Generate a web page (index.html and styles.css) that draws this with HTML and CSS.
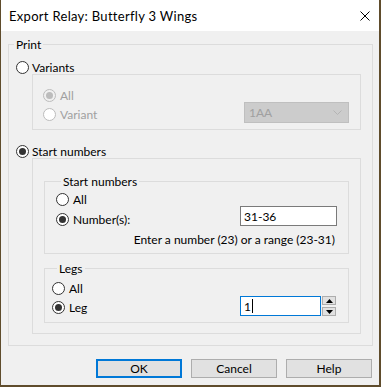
FILE: index.html
```html
<!DOCTYPE html>
<html lang="en">
<head>
    <meta charset="UTF-8">
    <title>Export Relay</title>
    <link rel="stylesheet" href="styles.css">
</head>
<body>
    <div class="window">
        <div class="titlebar">
            <span class="title">Export Relay: Butterfly 3 Wings</span>
            <svg class="close" width="10" height="10" viewBox="0 0 10 10">
                <path d="M0.5 0.5 L9.5 9.5 M9.5 0.5 L0.5 9.5" stroke="#000" stroke-width="1" fill="none"/>
            </svg>
        </div>
        <div class="client">
            <fieldset class="group print-group">
                <legend>Print</legend>

                <div class="opt-row variants-opt">
                    <span class="radio"></span>
                    <span class="opt-label">Variants</span>
                </div>
                <div class="subbox variants-box">
                    <div class="opt-row sub-opt disabled">
                        <span class="radio checked"></span>
                        <span class="opt-label">All</span>
                    </div>
                    <div class="variant-row">
                        <div class="opt-row sub-opt disabled">
                            <span class="radio"></span>
                            <span class="opt-label">Variant</span>
                        </div>
                        <div class="combo">
                            <span>1AA</span>
                            <svg width="9" height="5" viewBox="0 0 9 5">
                                <path d="M0.5 0.5 L4.5 4.5 L8.5 0.5" stroke="#b4b4b4" fill="none"/>
                            </svg>
                        </div>
                    </div>
                </div>

                <div class="opt-row start-opt">
                    <span class="radio checked"></span>
                    <span class="opt-label">Start numbers</span>
                </div>
                <div class="subbox start-box">
                    <fieldset class="group inner-group numbers-group">
                        <legend>Start numbers</legend>
                        <div class="opt-row">
                            <span class="radio"></span>
                            <span class="opt-label">All</span>
                        </div>
                        <div class="field-row">
                            <div class="opt-row">
                                <span class="radio checked"></span>
                                <span class="opt-label">Number(s):</span>
                            </div>
                            <input type="text" class="textbox numbers-input" value="31-36">
                        </div>
                        <div class="hint">Enter a number (23) or a range (23-31)</div>
                    </fieldset>

                    <fieldset class="group inner-group legs-group">
                        <legend>Legs</legend>
                        <div class="opt-row">
                            <span class="radio"></span>
                            <span class="opt-label">All</span>
                        </div>
                        <div class="field-row">
                            <div class="opt-row">
                                <span class="radio checked"></span>
                                <span class="opt-label">Leg</span>
                            </div>
                            <div class="textbox leg-input focused"><span>1</span><span class="caret"></span></div>
                            <div class="spinner">
                                <div class="spin-btn">
                                    <svg width="7" height="4" viewBox="0 0 7 4"><path d="M3.5 0 L7 4 L0 4 Z" fill="#000"/></svg>
                                </div>
                                <div class="spin-btn">
                                    <svg width="7" height="4" viewBox="0 0 7 4"><path d="M0 0 L7 0 L3.5 4 Z" fill="#000"/></svg>
                                </div>
                            </div>
                        </div>
                    </fieldset>
                </div>
            </fieldset>

            <div class="buttons">
                <button type="button" class="btn default">OK</button>
                <button type="button" class="btn">Cancel</button>
                <button type="button" class="btn">Help</button>
            </div>
        </div>
    </div>
</body>
</html>
```

FILE: styles.css
```css
body {
    margin: 0;
    background-color: #5f4c2c;
    font-family: 'Lato', 'Noto Sans', sans-serif;
    font-size: 12px;
    color: #000;
}

.window {
    margin-left: 1px;
    width: 378px;
    height: 385px;
    background-color: #f0f0f0;
}

.titlebar {
    height: 31px;
    background-color: #fff;
    display: flex;
    align-items: center;
    justify-content: space-between;
    padding: 0 9px 0 8px;
    box-sizing: border-box;
}

.title {
    font-size: 13px;
    line-height: 16px;
    letter-spacing: 0.3px;
    margin-top: 1px;
}

.close {
    display: block;
}

.client {
    padding-top: 6px;
}

/* group boxes */
.group {
    margin: 0;
    padding: 0;
    border: 1px solid #dcdcdc;
    min-width: 0;
}

.group legend {
    padding: 0 2px;
    margin-left: 5px;
    line-height: 15px;
}

.print-group {
    margin-left: 7px;
    width: 365px;
    box-sizing: border-box;
    padding-bottom: 11px;
}

.subbox {
    border: 1px solid #dcdcdc;
    margin-left: 23px;
    width: 329px;
    box-sizing: border-box;
}

/* radio rows */
.opt-row {
    display: flex;
    align-items: center;
    height: 13px;
    line-height: 13px;
    white-space: nowrap;
}

.radio {
    width: 13px;
    height: 13px;
    box-sizing: border-box;
    border: 1px solid #333;
    border-radius: 50%;
    background-color: #fff;
    margin-right: 4px;
    display: flex;
    align-items: center;
    justify-content: center;
    flex-shrink: 0;
}

.radio.checked::after {
    content: '';
    width: 7px;
    height: 7px;
    border-radius: 50%;
    background-color: #333;
}

.disabled .radio {
    border-color: #bcbcbc;
    background-color: #fff;
}

.disabled .radio.checked {
    background-color: #f0f0f0;
}

.disabled .radio.checked::after {
    background-color: #bcbcbc;
}

.disabled .opt-label {
    color: #a0a0a0;
}

.variants-opt {
    margin-top: 9px;
    margin-left: 7px;
}

.variants-opt .radio,
.start-opt .radio {
    margin-right: 3px;
}

.variants-box {
    padding: 14px 11px 6px 10px;
}

.sub-opt .radio {
    margin-right: 4px;
}

.variant-row {
    display: flex;
    justify-content: space-between;
    align-items: flex-start;
    height: 21px;
}

.variant-row .opt-row {
    margin-top: 6px;
}

.combo {
    width: 105px;
    height: 21px;
    box-sizing: border-box;
    border: 1px solid #bfbfbf;
    background-color: #cccccc;
    color: #a0a0a0;
    display: flex;
    align-items: center;
    justify-content: space-between;
    padding: 0 6px 0 4px;
}

.start-opt {
    margin-top: 15px;
    margin-left: 7px;
}

.start-box {
    padding: 15px 11px 10px 11px;
}

.inner-group {
    width: 305px;
    box-sizing: border-box;
}

.numbers-group {
    padding: 4px 11px 6px 11px;
}

.legs-group {
    margin-top: 7px;
    padding: 6px 12px 6px 7px;
}

.field-row {
    display: flex;
    align-items: flex-start;
    height: 20px;
}

.numbers-group .field-row .opt-row {
    margin-top: 7px;
}

.legs-group .field-row {
    margin-top: 1px;
}

.legs-group .field-row .opt-row {
    margin-top: 5px;
}

.textbox {
    height: 20px;
    box-sizing: border-box;
    border: 1px solid #7a7a7a;
    background-color: #fff;
    font: inherit;
    padding: 0 3px;
    margin: 0 0 0 auto;
    outline: none;
}

.numbers-input {
    width: 97px;
}

.leg-input {
    width: 81px;
    display: flex;
    align-items: center;
}

.leg-input.focused {
    border-color: #0078d7;
}

.caret {
    width: 1px;
    height: 14px;
    background-color: #000;
    margin-left: 1px;
}

.spinner {
    margin-left: 1px;
    width: 14px;
    height: 20px;
    display: flex;
    flex-direction: column;
    justify-content: space-between;
    padding: 0;
}

.spin-btn {
    height: 9px;
    box-sizing: border-box;
    border: 1px solid #adadad;
    background-color: #e1e1e1;
    display: flex;
    align-items: center;
    justify-content: center;
}

.hint {
    text-align: right;
    margin-top: 7px;
    line-height: 14px;
    padding-right: 2px;
}

/* dialog buttons */
.buttons {
    display: flex;
    justify-content: flex-end;
    gap: 9px;
    margin-top: 13px;
    padding-right: 7px;
}

.btn {
    width: 86px;
    height: 19px;
    box-sizing: border-box;
    border: 1px solid #adadad;
    background-color: #e1e1e1;
    font: inherit;
    color: #000;
    padding: 0;
    line-height: 15px;
}

.btn.default {
    border: 2px solid #0078d7;
}
```
